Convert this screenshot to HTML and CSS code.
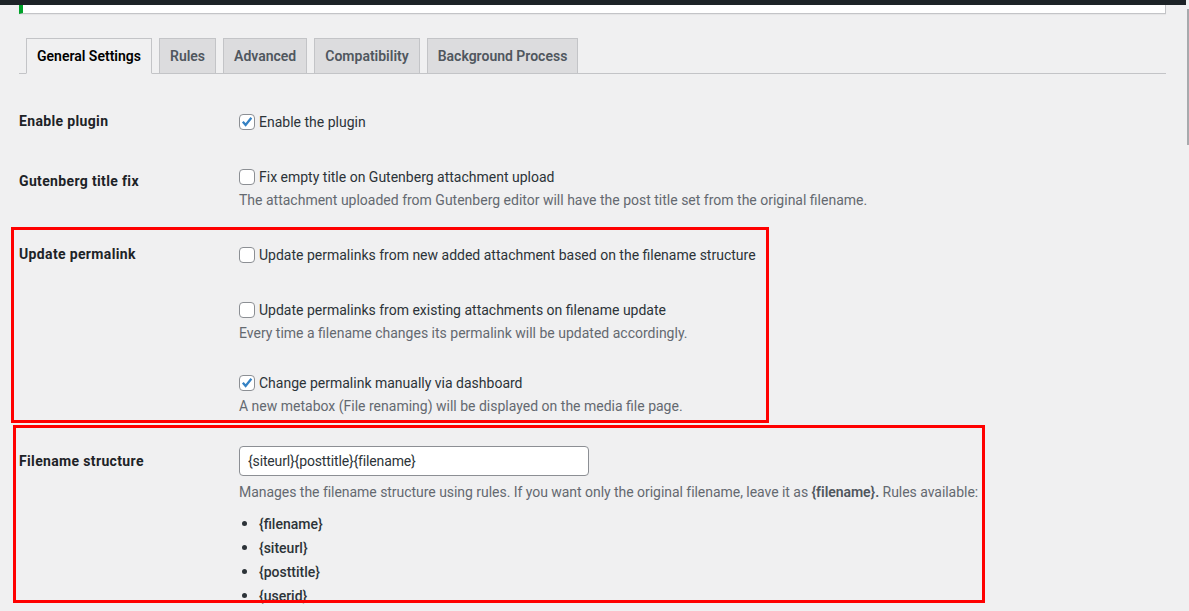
FILE: index.html
```html
<!DOCTYPE html>
<html lang="en">
<head>
    <meta charset="UTF-8">
    <meta name="viewport" content="width=device-width, initial-scale=1.0">
    <title>File Renaming Settings</title>
    <link rel="stylesheet" href="styles.css">
</head>
<body>
    <div class="page">
        <div class="main">
            <div class="adminbar"></div>
            <div class="wrap">
                <div class="notice"></div>

                <nav class="nav-tabs">
                    <a href="#" class="nav-tab nav-tab-active">General Settings</a>
                    <a href="#" class="nav-tab">Rules</a>
                    <a href="#" class="nav-tab">Advanced</a>
                    <a href="#" class="nav-tab">Compatibility</a>
                    <a href="#" class="nav-tab">Background Process</a>
                </nav>

                <div class="form-table">
                    <!-- Enable plugin -->
                    <div class="row row-enable">
                        <div class="row-label">Enable plugin</div>
                        <div class="row-field">
                            <label class="option">
                                <span class="cb"><svg viewBox="0 0 16 16"><path d="M3.2 7.8 L6.4 11.3 L13 3.2"/></svg></span>
                                Enable the plugin
                            </label>
                        </div>
                    </div>

                    <!-- Gutenberg -->
                    <div class="row row-gutenberg">
                        <div class="row-label">Gutenberg title fix</div>
                        <div class="row-field">
                            <label class="option">
                                <span class="cb"></span>
                                Fix empty title on Gutenberg attachment upload
                            </label>
                            <p class="description">The attachment uploaded from Gutenberg editor will have the post title set from the original filename.</p>
                        </div>
                    </div>

                    <!-- Permalinks -->
                    <div class="row row-permalink">
                        <div class="row-label">Update permalink</div>
                        <div class="row-field">
                            <label class="option">
                                <span class="cb"></span>
                                Update permalinks from new added attachment based on the filename structure
                            </label>
                            <label class="option spaced">
                                <span class="cb"></span>
                                Update permalinks from existing attachments on filename update
                            </label>
                            <p class="description">Every time a filename changes its permalink will be updated accordingly.</p>
                            <label class="option spaced">
                                <span class="cb"><svg viewBox="0 0 16 16"><path d="M3.2 7.8 L6.4 11.3 L13 3.2"/></svg></span>
                                Change permalink manually via dashboard
                            </label>
                            <p class="description">A new metabox (File renaming) will be displayed on the media file page.</p>
                        </div>
                        <div class="annotation annotation-permalink"></div>
                    </div>

                    <!-- Filename structure -->
                    <div class="row row-structure">
                        <div class="row-label">Filename structure</div>
                        <div class="row-field">
                            <input type="text" class="text-input" value="{siteurl}{posttitle}{filename}">
                            <p class="description desc-structure">Manages the filename structure using rules. If you want only the original filename, leave it as <strong>{filename}.</strong> Rules available:</p>
                            <ul class="rules">
                                <li>{filename}</li>
                                <li>{siteurl}</li>
                                <li>{posttitle}</li>
                                <li>{userid}</li>
                            </ul>
                        </div>
                        <div class="annotation annotation-structure"></div>
                    </div>
                </div>
            </div>
        </div>
        <div class="scrollbar">
            <div class="scrollbar-thumb"></div>
        </div>
    </div>
</body>
</html>
```

FILE: styles.css
```css
* {
    box-sizing: border-box;
}

html {
    overflow: hidden;
}

body {
    margin: 0;
    background-color: #f0f0f1;
    font-family: Roboto, "Segoe UI", sans-serif;
    font-size: 14px;
    color: #2c3338;
}

.page {
    display: flex;
}

.main {
    width: 1186px;
}

.adminbar {
    height: 5px;
    background-color: #1d2327;
}

.scrollbar {
    flex: 1;
    padding-top: 9px;
}

.scrollbar-thumb {
    width: 2px;
    height: 136px;
    margin-left: 1px;
    background-color: #a7aaad;
}

.wrap {
    margin-left: 19px;
    width: 1147px;
}

.notice {
    height: 9px;
    background: white;
    border: 1px solid #c3c4c7;
    border-top: 0;
    border-left: 4px solid #00a32a;
    box-shadow: 0 1px 1px rgba(0, 0, 0, 0.04);
}

/* tabs */
.nav-tabs {
    display: flex;
    gap: 7px;
    margin-top: 24px;
    padding-left: 7px;
    border-bottom: 1px solid #c3c4c7;
}

.nav-tab {
    margin-bottom: -1px;
    padding: 5px 10px;
    border: 1px solid #c3c4c7;
    background-color: #dcdcde;
    color: #50575e;
    font-weight: 600;
    line-height: 24px;
    text-decoration: none;
}

.nav-tab-active {
    background-color: #f0f0f1;
    border-bottom-color: #f0f0f1;
    color: #000;
}

/* settings rows */
.form-table {
    margin-top: 18px;
}

.row {
    position: relative;
    display: grid;
    grid-template-columns: 220px 1fr;
}

.row-label {
    padding-top: 20px;
    font-weight: 700;
    line-height: 18px;
    letter-spacing: 0.35px;
    color: #1d2327;
}

.row-field {
    padding: 18px 10px 18px 0;
}

.row-gutenberg .row-field {
    padding-top: 13px;
    padding-bottom: 16px;
}

.row-permalink .row-field {
    padding-bottom: 17px;
}

.row-structure .row-field {
    padding: 14px 10px 0 0;
}

.option {
    display: flex;
    align-items: center;
    gap: 4px;
    line-height: 24px;
    color: #2c3338;
}

.option.spaced {
    margin-top: 31px;
}

.description + .option.spaced {
    margin-top: 29px;
}

.cb {
    width: 16px;
    height: 16px;
    border: 1px solid #8c8f94;
    border-radius: 4px;
    background: white;
    flex-shrink: 0;
}

.cb svg {
    display: block;
    width: 14px;
    height: 14px;
    overflow: visible;
}

.cb path {
    fill: none;
    stroke: #3582c4;
    stroke-width: 2.6;
}

.description {
    margin: 2px 0 0;
    line-height: 18px;
    color: #646970;
}

.description strong {
    font-weight: 600;
    color: #50575e;
}

.desc-structure {
    margin-top: 7px;
    letter-spacing: -0.04px;
}

.text-input {
    display: block;
    width: 350px;
    height: 30px;
    padding: 0 8px;
    border: 1px solid #8c8f94;
    border-radius: 4px;
    background: white;
    font-family: inherit;
    font-size: 14px;
    letter-spacing: -0.15px;
    color: #2c3338;
}

.rules {
    margin: 11px 0 0;
    padding-left: 20px;
}

.rules li {
    line-height: 24px;
    font-weight: 500;
    color: #2c3338;
}

.rules li::marker {
    font-size: 16px;
}

/* red highlight boxes drawn over the screenshot */
.annotation {
    position: absolute;
    border: 3px solid #ff0000;
    pointer-events: none;
}

.annotation-permalink {
    top: 2px;
    left: -8px;
    width: 758px;
    height: 196px;
}

.annotation-structure {
    top: -7px;
    left: -6px;
    width: 972px;
    height: 178px;
}
```
